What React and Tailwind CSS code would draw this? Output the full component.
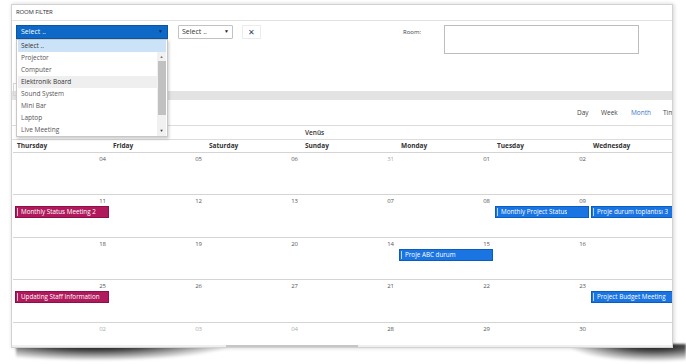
import React from "react";

const font = { fontFamily: '"Open Sans", "Noto Sans", sans-serif' };

const days = ["Thursday", "Friday", "Saturday", "Sunday", "Monday", "Tuesday", "Wednesday"];

const options = ["Projector", "Computer", "Elektronik Board", "Sound System", "Mini Bar", "Laptop", "Live Meeting"];

const weeks = [
  { h: "h-[41px]", nums: ["04", "05", "06", "31", "01", "02", "03"], muted: [3], events: {} },
  {
    h: "h-[42px]",
    nums: ["11", "12", "13", "07", "08", "09", "10"],
    muted: [],
    events: {
      0: { label: "Monthly Status Meeting 2", tone: "red" },
      5: { label: "Monthly Project Status", tone: "blue" },
      6: { label: "Proje durum toplantısı 3", tone: "blue" },
    },
  },
  {
    h: "h-[41px]",
    nums: ["18", "19", "20", "14", "15", "16", "17"],
    muted: [],
    events: { 4: { label: "Proje ABC durum", tone: "blue" } },
  },
  {
    h: "h-[42px]",
    nums: ["25", "26", "27", "21", "22", "23", "24"],
    muted: [],
    events: {
      0: { label: "Updating Staff Information", tone: "red" },
      6: { label: "Project Budget Meeting", tone: "blue" },
    },
  },
  { h: "h-[22px]", nums: ["02", "03", "04", "28", "29", "30", "01"], muted: [0, 1, 2], events: {}, last: true },
];

const EventBar = ({ label, tone }) => (
  <div
    className={
      tone === "red"
        ? "ml-[2px] h-[12px] border border-[#8e0e47] bg-[#b01a5c] flex items-center"
        : "ml-[2px] h-[12px] border border-[#0b5cc0] bg-[#1a74e2] flex items-center"
    }
  >
    <div className="ml-[1px] w-[1px] h-[8px] bg-white/70" />
    <span className="pl-[3px] text-[6.3px] leading-[10px] font-medium text-white whitespace-nowrap overflow-hidden">
      {label}
    </span>
  </div>
);

export default function App() {
  return (
    <div className="w-[686px] h-[364px] bg-white overflow-hidden text-[#444]" style={font}>
      <div className="relative z-10 ml-[11px] mt-[4px] w-[662px] border border-[#d2d2d2] bg-white shadow-[1px_0_4px_rgba(0,0,0,0.18)]">
        {/* header */}
        <div className="h-[16px] border-b border-[#e2e2e2] pl-[4px] flex items-center">
          <span className="text-[6px] uppercase text-[#333] tracking-tight">Room Filter</span>
        </div>

        {/* filter area */}
        <div className="relative h-[70px]">
          <div className="flex items-start pt-[4px] pl-[4px]">
            <div className="w-[152px] h-[14px] bg-[#0d68c6] border border-[#0a55a6] flex items-center justify-between px-[4px]">
              <span className="text-[7px] text-white">Select ..</span>
              <span className="text-[5px] text-[#0b2b55]">▼</span>
            </div>
            <div className="ml-[10px] w-[55px] h-[14px] border border-[#c2c2c2] rounded-[1px] flex items-center justify-between px-[3px]">
              <span className="text-[7px] text-[#333]">Select ..</span>
              <span className="text-[5px] text-[#222]">▼</span>
            </div>
            <div className="ml-[9px] w-[19px] h-[14px] border border-[#ececec] flex items-center justify-center">
              <span className="text-[8px] leading-none text-[#35406b]">✕</span>
            </div>
            <span className="ml-[142px] mt-[3px] text-[6px] text-[#444]">Room:</span>
            <div className="ml-[23px] w-[195px] h-[29px] border border-[#bdbdbd]" />
          </div>
          <div className="ml-[1px] mt-[29px] w-[70px] h-[13px] border border-[#d6d6d6]" />

          {/* open dropdown menu */}
          <div className="absolute left-[4px] top-[18px] w-[152px] h-[98px] bg-white border border-[#c8c8c8] shadow-[1px_2px_3px_rgba(0,0,0,0.2)] overflow-hidden">
            <div className="h-[12px] mx-[1px] bg-[#cce3f7] flex items-center pl-[3px] text-[6.5px] text-[#333]">Select ..</div>
            <div className="flex">
              <div className="flex-1">
                {options.map((o) => (
                  <div
                    key={o}
                    className={
                      o === "Elektronik Board"
                        ? "h-[12px] ml-[1px] bg-[#efefef] flex items-center pl-[3px] text-[6.5px] text-[#333]"
                        : "h-[12px] ml-[1px] flex items-center pl-[3px] text-[6.5px] text-[#555]"
                    }
                  >
                    {o}
                  </div>
                ))}
              </div>
              <div className="w-[9px] mr-[1px] bg-[#f1f1f1] flex flex-col items-center">
                <span className="h-[9px] text-[4px] leading-[9px] text-[#777]">▲</span>
                <div className="w-[8px] h-[54px] bg-[#c1c1c1]" />
                <div className="flex-1" />
                <span className="h-[10px] text-[4px] leading-[10px] text-[#333]">▼</span>
              </div>
            </div>
          </div>
        </div>

        {/* gray band */}
        <div className="h-[9px] bg-[#e3e3e3]" />

        {/* view toolbar */}
        <div className="h-[26px] border-b border-[#dcdcdc] flex items-center pl-[565px] whitespace-nowrap overflow-hidden text-[6.5px]">
          <span className="w-[24px] shrink-0 text-[#444]">Day</span>
          <span className="w-[30px] shrink-0 text-[#444]">Week</span>
          <span className="w-[32px] shrink-0 text-[#3778c8]">Month</span>
          <span className="shrink-0 text-[#444]">Timeline</span>
        </div>

        {/* resource row */}
        <div className="h-[14px] border-b border-[#dcdcdc] flex items-center pl-[293px]">
          <span className="text-[6.5px] font-semibold text-[#333]">Venüs</span>
        </div>

        {/* calendar grid */}
        <div className="overflow-hidden">
          <div className="w-[673px] pl-[1px]">
            <div className="h-[13px] border-b border-[#d4d4d4] grid grid-cols-[repeat(7,96px)] items-center">
              {days.map((d) => (
                <span key={d} className="pl-[4px] text-[6.5px] font-bold text-[#333]">
                  {d}
                </span>
              ))}
            </div>
            {weeks.map((w, i) => (
              <div
                key={i}
                className={
                  w.last
                    ? `${w.h} grid grid-cols-[repeat(7,96px)]`
                    : `${w.h} border-b border-[#d4d4d4] grid grid-cols-[repeat(7,96px)] box-content`
                }
              >
                {w.nums.map((n, c) => (
                  <div key={c} className="pt-[1px]">
                    <div
                      className={
                        w.muted.includes(c)
                          ? "h-[10px] leading-[10px] text-right pr-[3px] text-[6px] text-[#aaa]"
                          : "h-[10px] leading-[10px] text-right pr-[3px] text-[6px] text-[#555]"
                      }
                    >
                      {n}
                    </div>
                    {w.events[c] && <EventBar {...w.events[c]} />}
                  </div>
                ))}
              </div>
            ))}
          </div>
        </div>

        {/* horizontal scrollbar */}
        <div className="h-[2px] bg-[#efefef] flex">
          <div className="ml-[214px] w-[132px] bg-[#c6c6c6]" />
        </div>
      </div>

      {/* curled page shadow */}
      <div className="flex -mt-[4px] h-[18px]">
        <div className="ml-[16px] w-[330px] h-[17px] bg-[radial-gradient(ellipse_42%_100%_at_24%_0%,rgba(0,0,0,0.95),rgba(0,0,0,0.7)_40%,transparent_100%)] blur-[1px]" />
        <div className="ml-[196px] w-[146px] h-[18px] bg-[radial-gradient(ellipse_60%_100%_at_78%_0%,rgba(0,0,0,0.95),rgba(0,0,0,0.7)_40%,transparent_100%)] blur-[1px]" />
      </div>
    </div>
  );
}
